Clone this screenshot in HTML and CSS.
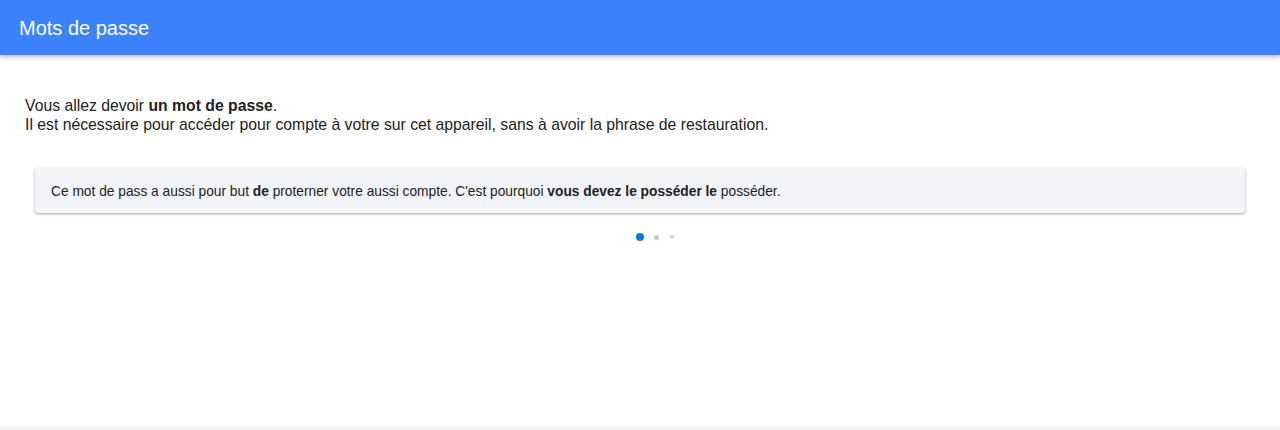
FILE: index.html
```html
<!DOCTYPE html>
<html lang="fr">
<head>
<meta charset="utf-8">
<title>Mots de passe</title>
<link rel="stylesheet" href="styles.css">
</head>
<body>
<header class="topbar"><h1 class="title">Mots de passe</h1></header>
<main class="content">
  <p class="intro">Vous allez devoir <strong>un mot de passe</strong>.<br>Il est nécessaire pour accéder pour compte à votre sur cet appareil, sans à avoir la phrase de restauration.</p>
  <div class="card"><p class="card-text">Ce mot de pass a aussi pour but <strong>de</strong> proterner votre aussi compte. C'est pourquoi <strong>vous devez le posséder le</strong> posséder.</p></div>
  <div class="dots"><span class="slot"><span class="dot dot-active"></span></span><span class="slot"><span class="dot dot-2"></span></span><span class="slot"><span class="dot dot-3"></span></span></div>
</main>
<footer class="bottombar"></footer>
</body>
</html>
```
FILE: styles.css
```css
* { box-sizing: border-box; }
html, body { margin: 0; padding: 0; height: 100%; overflow: hidden; }
body { font-family: "Liberation Sans", Arial, sans-serif; color: #222; background: #fff; display: flex; flex-direction: column; }
.topbar { height: 55px; background: #3b82fc; box-shadow: 0 2px 5px rgba(0,0,0,0.28); display: flex; align-items: center; padding: 1px 0 0 19px; position: relative; z-index: 1; }
.title { margin: 0; font-size: 20px; font-weight: normal; color: #fff; }
.content { flex: 1; padding: 41px 25px 0 25px; }
.intro { margin: 0; font-size: 15.75px; line-height: 19px; color: #222; }
.card { margin: 34px 10px 0 10px; background: #f3f4f8; border-radius: 3px; box-shadow: 0 1px 3px rgba(0,0,0,0.35); height: 45px; display: flex; align-items: center; padding: 2px 0 0 16px; }
.card-text { margin: 0; font-size: 13.75px; line-height: 16px; color: #222; }
.dots { display: flex; justify-content: center; align-items: center; margin-top: 20px; padding-left: 32px; }
.slot { width: 16px; height: 8px; display: flex; align-items: center; justify-content: center; }
.dot { border-radius: 50%; display: block; }
.dot-active { width: 8px; height: 8px; background: #0b74f0; }
.dot-2 { width: 5px; height: 5px; background: #c8c8c8; }
.dot-3 { width: 4px; height: 4px; background: #cfcfcf; }
.bottombar { height: 5px; flex-shrink: 0; background: linear-gradient(to bottom, #ffffff, #eeeeee); }
```
